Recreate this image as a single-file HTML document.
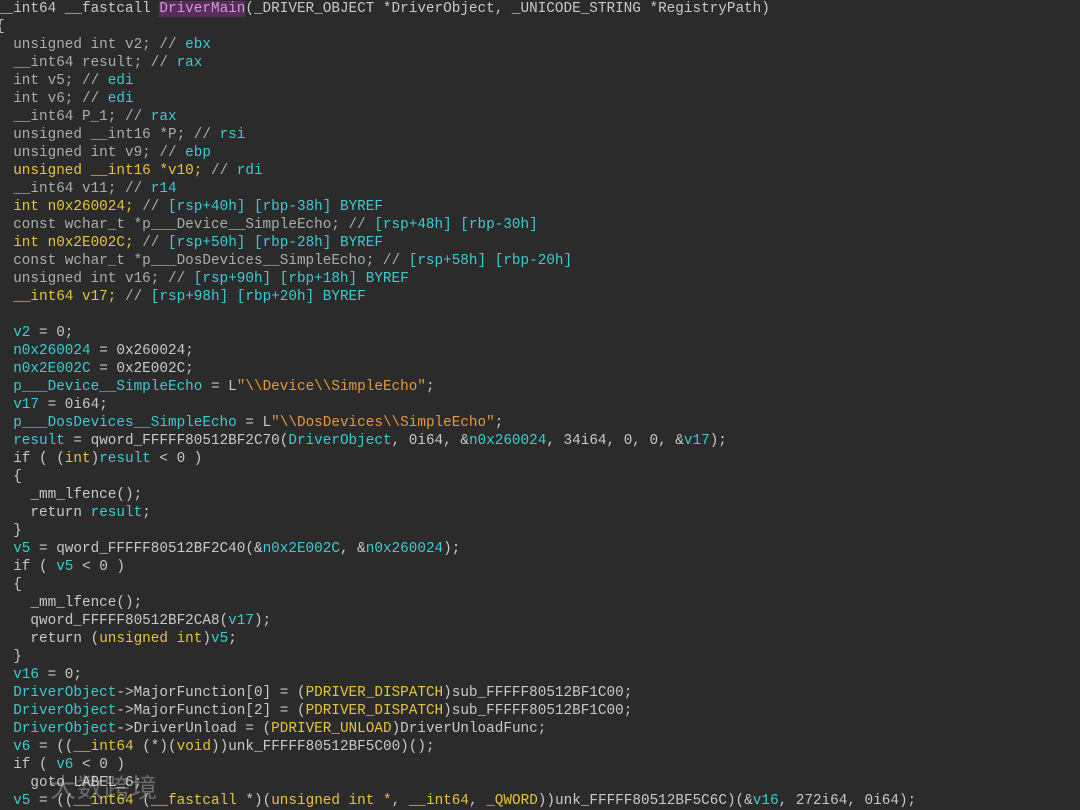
<!DOCTYPE html>
<html><head><meta charset="utf-8"><style>
html,body{margin:0;padding:0;background:#2b2b2b;width:1080px;height:804px;overflow:hidden}
pre{position:absolute;left:-4px;top:0px;margin:0;font-family:"Liberation Mono","DejaVu Sans Mono",monospace;font-size:14.33px;line-height:18px;color:#c8c8c8}
.v{color:#3ccbd2}.y{color:#e8c23c}.s{color:#e8983a}.g{color:#a9adad}
.h{background:#5c2a5c;color:#c4a0d0}
.w{position:absolute;left:50px;top:768px;font-family:"Noto Sans CJK SC",sans-serif;font-size:26px;color:rgba(255,255,255,0.3);letter-spacing:1px}
</style></head><body>
<pre>__int64 __fastcall <span class="h">DriverMain</span>(_DRIVER_OBJECT *DriverObject, _UNICODE_STRING *RegistryPath)
{
<span class="g">  unsigned int v2; // </span><span class="v">ebx</span>
<span class="g">  __int64 result; // </span><span class="v">rax</span>
<span class="g">  int v5; // </span><span class="v">edi</span>
<span class="g">  int v6; // </span><span class="v">edi</span>
<span class="g">  __int64 P_1; // </span><span class="v">rax</span>
<span class="g">  unsigned __int16 *P; // </span><span class="v">rsi</span>
<span class="g">  unsigned int v9; // </span><span class="v">ebp</span>
  <span class="y">unsigned __int16 *v10;</span><span class="g"> // </span><span class="v">rdi</span>
<span class="g">  __int64 v11; // </span><span class="v">r14</span>
  <span class="y">int n0x260024;</span><span class="g"> // </span><span class="v">[rsp+40h] [rbp-38h] BYREF</span>
<span class="g">  const wchar_t *p___Device__SimpleEcho; // </span><span class="v">[rsp+48h] [rbp-30h]</span>
  <span class="y">int n0x2E002C;</span><span class="g"> // </span><span class="v">[rsp+50h] [rbp-28h] BYREF</span>
<span class="g">  const wchar_t *p___DosDevices__SimpleEcho; // </span><span class="v">[rsp+58h] [rbp-20h]</span>
<span class="g">  unsigned int v16; // </span><span class="v">[rsp+90h] [rbp+18h] BYREF</span>
  <span class="y">__int64 v17;</span><span class="g"> // </span><span class="v">[rsp+98h] [rbp+20h] BYREF</span>

  <span class="v">v2</span> = 0;
  <span class="v">n0x260024</span> = 0x260024;
  <span class="v">n0x2E002C</span> = 0x2E002C;
  <span class="v">p___Device__SimpleEcho</span> = L<span class="s">"\\Device\\SimpleEcho"</span>;
  <span class="v">v17</span> = 0i64;
  <span class="v">p___DosDevices__SimpleEcho</span> = L<span class="s">"\\DosDevices\\SimpleEcho"</span>;
  <span class="v">result</span> = qword_FFFFF80512BF2C70(<span class="v">DriverObject</span>, 0i64, &amp;<span class="v">n0x260024</span>, 34i64, 0, 0, &amp;<span class="v">v17</span>);
  if ( (<span class="y">int</span>)<span class="v">result</span> &lt; 0 )
  {
    _mm_lfence();
    return <span class="v">result</span>;
  }
  <span class="v">v5</span> = qword_FFFFF80512BF2C40(&amp;<span class="v">n0x2E002C</span>, &amp;<span class="v">n0x260024</span>);
  if ( <span class="v">v5</span> &lt; 0 )
  {
    _mm_lfence();
    qword_FFFFF80512BF2CA8(<span class="v">v17</span>);
    return (<span class="y">unsigned int</span>)<span class="v">v5</span>;
  }
  <span class="v">v16</span> = 0;
  <span class="v">DriverObject</span>-&gt;MajorFunction[0] = (<span class="y">PDRIVER_DISPATCH</span>)sub_FFFFF80512BF1C00;
  <span class="v">DriverObject</span>-&gt;MajorFunction[2] = (<span class="y">PDRIVER_DISPATCH</span>)sub_FFFFF80512BF1C00;
  <span class="v">DriverObject</span>-&gt;DriverUnload = (<span class="y">PDRIVER_UNLOAD</span>)DriverUnloadFunc;
  <span class="v">v6</span> = ((<span class="y">__int64</span> (*)(<span class="y">void</span>))unk_FFFFF80512BF5C00)();
  if ( <span class="v">v6</span> &lt; 0 )
    goto LABEL_6;
  <span class="v">v5</span> = ((<span class="y">__int64</span> (<span class="y">__fastcall</span> *)(<span class="y">unsigned int *</span>, <span class="y">__int64</span>, <span class="y">_QWORD</span>))unk_FFFFF80512BF5C6C)(&amp;<span class="v">v16</span>, 272i64, 0i64);
</pre>
<div class="w">大数跨境</div>
</body></html>
